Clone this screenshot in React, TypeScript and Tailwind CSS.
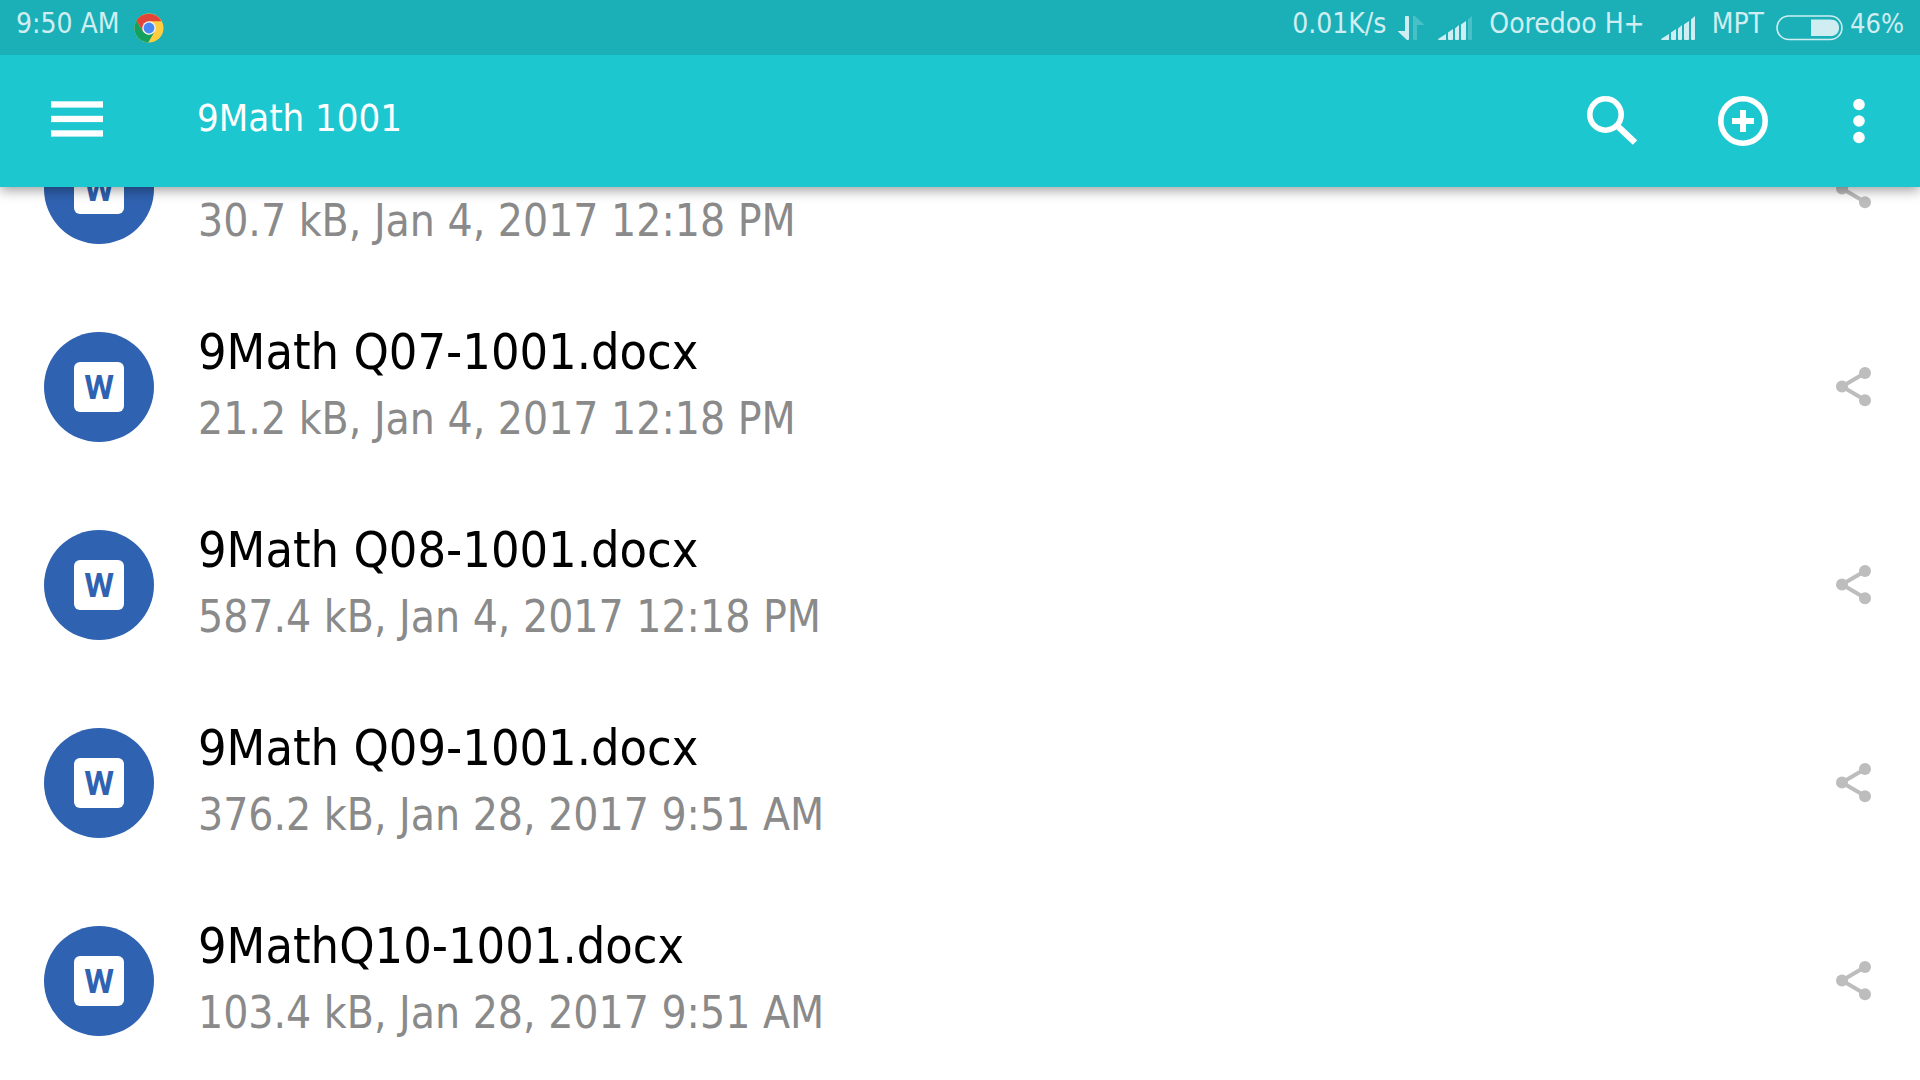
type FileItem = {
  name: string;
  info: string;
};

const files: FileItem[] = [
  { name: '', info: '30.7 kB, Jan 4, 2017 12:18 PM' },
  { name: '9Math Q07-1001.docx', info: '21.2 kB, Jan 4, 2017 12:18 PM' },
  { name: '9Math Q08-1001.docx', info: '587.4 kB, Jan 4, 2017 12:18 PM' },
  { name: '9Math Q09-1001.docx', info: '376.2 kB, Jan 28, 2017 9:51 AM' },
  { name: '9MathQ10-1001.docx', info: '103.4 kB, Jan 28, 2017 9:51 AM' },
];

const ChromeIcon = () => (
  <svg width="30" height="30" viewBox="0 0 30 30">
    <circle cx="15" cy="15" r="14.5" fill="#ffcd40" />
    <path d="M2.4 7.8A14.5 14.5 0 0 1 27.6 8.2H15L9.2 18.4Z" fill="#e24437" />
    <path d="M2.4 7.8L9.1 18.4Q12 21.8 15 21.7L20.9 18.3L14.2 29.5A14.5 14.5 0 0 1 2.4 7.8Z" fill="#12a15e" />
    <circle cx="15" cy="15" r="6.8" fill="#f1f1f1" />
    <circle cx="15" cy="15" r="5.4" fill="#4688f4" />
  </svg>
);

const TransferIcon = () => (
  <svg width="26" height="26" viewBox="0 0 26 26" fill="#d0eef1">
    <path d="M7 2Q7 1 8 1H10Q11 1 11 2V24Q11 25 10 25H9L0 16.5V16H7Z" />
    <path d="M19 24Q19 25 18 25H16Q15 25 15 24V1H17L26 9.5V10H19Z" opacity="0.25" />
  </svg>
);

const SignalIcon = ({ weak }: { weak?: boolean }) => (
  <svg width="35" height="24" viewBox="0 0 35 24" fill="#d0eef1">
    <path d="M0 23L8 18V24H1Q0 24 0 23Z" />
    <path d="M10 16.5L15 13V23Q15 24 14 24H11Q10 24 10 23Z" />
    <path d="M17 12.5L21 9V23Q21 24 20 24H18Q17 24 17 23Z" />
    <path d="M23 8.5L28 5V23Q28 24 27 24H24Q23 24 23 23Z" />
    <path d="M30 3.5L34 0V23Q34 24 33 24H31Q30 24 30 23Z" opacity={weak ? 0.25 : 1} />
  </svg>
);

const BatteryIcon = () => (
  <svg width="68" height="26" viewBox="0 0 68 26">
    <rect x="1" y="1" width="65" height="23.5" rx="11.75" fill="none" stroke="#d0eef1" strokeWidth="1.6" />
    <path d="M35 4.500H54C60 4.500 63 8 63 12.700C63 17.500 60 21 54 21H35Z" fill="#d0eef1" />
  </svg>
);

const MenuIcon = () => (
  <svg width="52" height="36" viewBox="0 0 52 36" fill="#fff">
    <rect y="0.300" width="52" height="6.300" />
    <rect y="14.800" width="52" height="6.300" />
    <rect y="29.300" width="52" height="6.300" />
  </svg>
);

const SearchIcon = () => (
  <svg width="52" height="52" viewBox="0 0 52 52" fill="none" stroke="#fff">
    <circle cx="18.500" cy="19.500" r="15.700" strokeWidth="5.600" />
    <path d="M31.500 32L48 47.500" strokeWidth="6.500" />
  </svg>
);

const AddIcon = () => (
  <svg width="50" height="50" viewBox="0 0 50 50" fill="none" stroke="#fff">
    <circle cx="25" cy="25" r="22.200" strokeWidth="5.600" />
    <path d="M25 14V36M14 25H36" strokeWidth="6" />
  </svg>
);

const MoreIcon = () => (
  <svg width="12" height="46" viewBox="0 0 12 46" fill="#fff">
    <circle cx="6" cy="6.500" r="5.800" />
    <circle cx="6" cy="23" r="5.800" />
    <circle cx="6" cy="39.500" r="5.800" />
  </svg>
);

const ShareIcon = () => (
  <svg width="35" height="40" viewBox="0 0 35 40" fill="#bdbdbd">
    <path d="M29 6L6 19.500L29 33" fill="none" stroke="#bdbdbd" strokeWidth="4" />
    <circle cx="29" cy="6" r="6" />
    <circle cx="6" cy="19.500" r="6" />
    <circle cx="29" cy="33.300" r="6" />
  </svg>
);

const StatusBar = () => (
  <div className="flex h-[55px] items-center justify-between bg-[#1bb0b8] pr-4 pl-4 text-[28px] leading-8 text-[#d0eef1]">
    <div className="flex items-center gap-3.5 pb-2">
      <span>9:50 AM</span>
      <span className="pt-2"><ChromeIcon /></span>
    </div>
    <div className="flex items-center">
      <span className="pb-2">0.01K/s</span>
      <span className="ml-3"><TransferIcon /></span>
      <span className="ml-3.5"><SignalIcon weak /></span>
      <span className="ml-4 pb-2">Ooredoo H+</span>
      <span className="ml-4"><SignalIcon /></span>
      <span className="ml-4 pb-2">MPT</span>
      <span className="ml-3"><BatteryIcon /></span>
      <span className="ml-1.5 pb-2 text-[27px]">46%</span>
    </div>
  </div>
);

const Toolbar = () => (
  <header className="flex h-[132px] items-center bg-[#1cc7d0] pr-[55px] pl-[51px] text-white">
    <button aria-label="Menu" className="cursor-pointer pb-1">
      <MenuIcon />
    </button>
    <h1 className="ml-[94px] flex-1 pb-1.5 text-[38px] leading-12">9Math 1001</h1>
    <div className="flex items-center">
      <button aria-label="Search" className="cursor-pointer"><SearchIcon /></button>
      <button aria-label="Add" className="ml-[79px] cursor-pointer"><AddIcon /></button>
      <button aria-label="More options" className="ml-[85px] cursor-pointer"><MoreIcon /></button>
    </div>
  </header>
);

const FileRow = ({ file }: { file: FileItem }) => (
  <li className="flex h-[198px] items-center pr-[49px] pl-11">
    <div className="flex size-[110px] shrink-0 items-center justify-center rounded-full bg-[#2f62b0]">
      <span className="flex size-[50px] items-center justify-center rounded-md bg-white font-['Roboto',sans-serif] text-[34px] leading-none font-bold text-[#2f62b0]">
        W
      </span>
    </div>
    <div className="ml-11 min-w-0 flex-1">
      <p className="h-16 truncate text-[50px] leading-16 text-black">{file.name}</p>
      <p className="truncate text-[44px] leading-[70px] text-[#8a8a8a]">{file.info}</p>
    </div>
    <button aria-label={`Share ${file.name}`} className="cursor-pointer">
      <ShareIcon />
    </button>
  </li>
);

const App = () => {
  return (
    <div className="flex h-screen flex-col overflow-hidden bg-white font-['DejaVu_Sans_Condensed','DejaVu_Sans',sans-serif]">
      <div className="z-10 shrink-0 shadow-[0_3px_12px_rgba(0,0,0,0.4)]">
        <StatusBar />
        <Toolbar />
      </div>
      {/* list is scrolled, the first row sits partly under the toolbar */}
      <ul className="-mt-[97px]">
        {files.map((file, index) => (
          <FileRow file={file} key={index} />
        ))}
      </ul>
    </div>
  );
};

export default App;
